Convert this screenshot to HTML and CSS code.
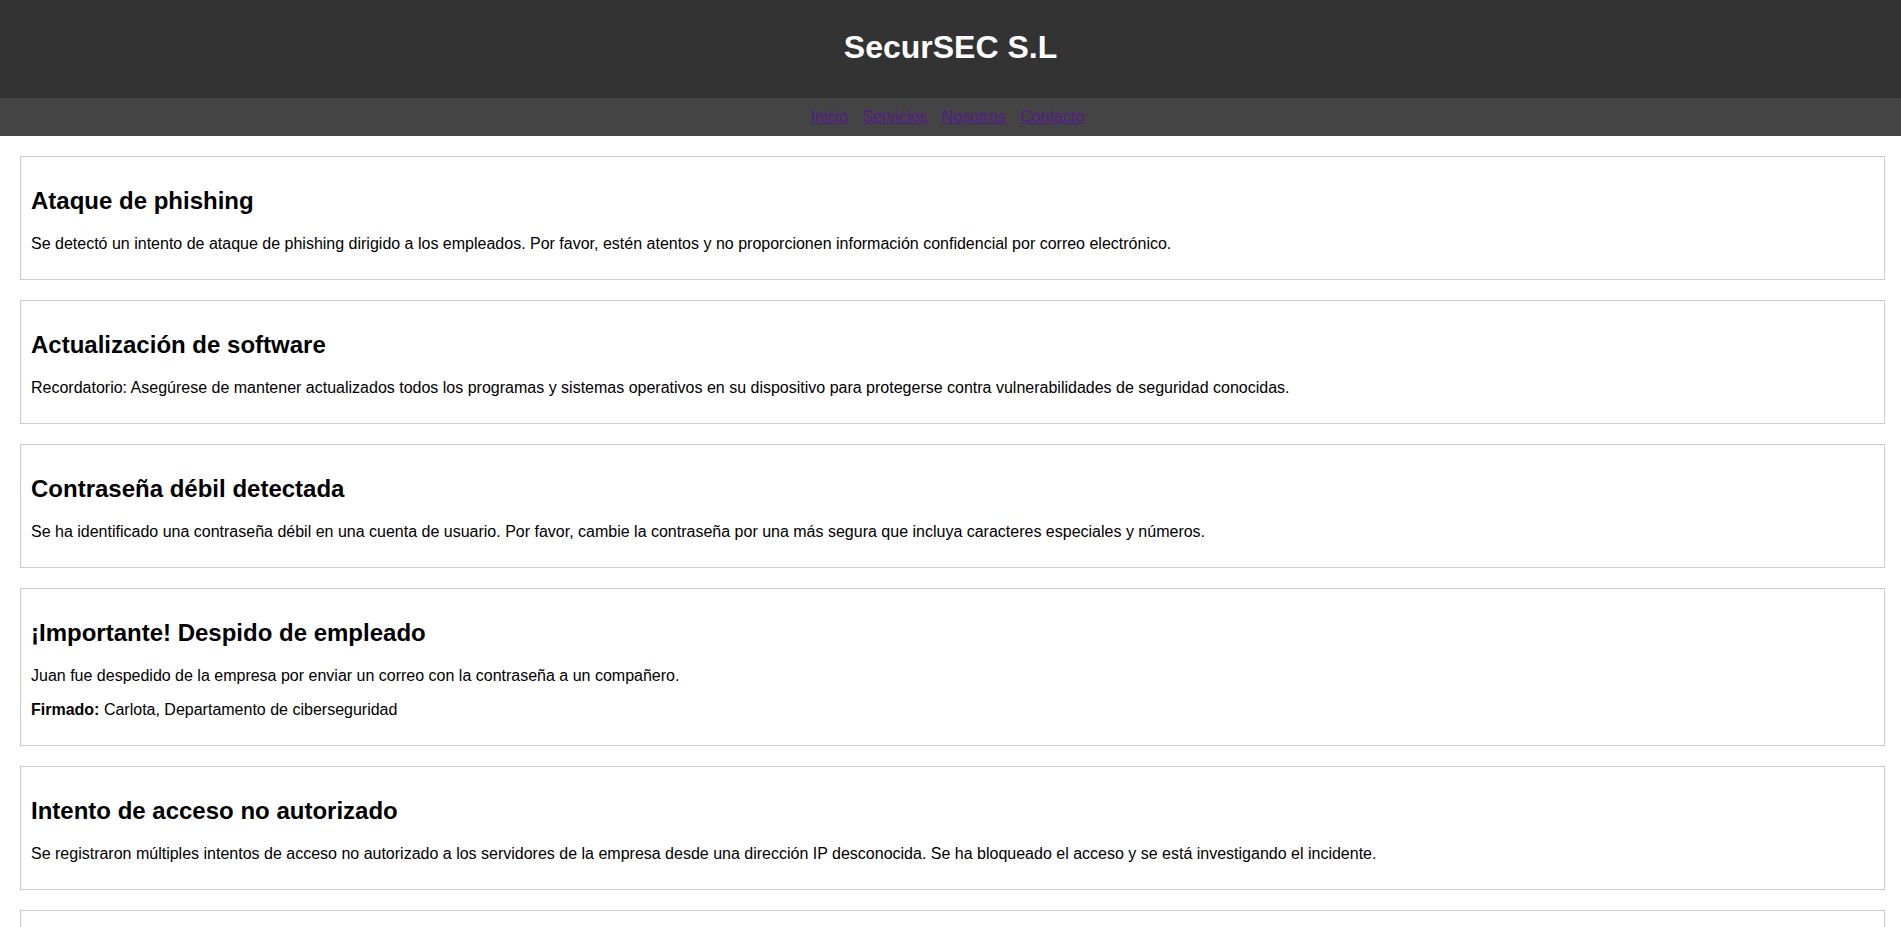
FILE: index.html
```html
<!DOCTYPE html>
<html lang="es">
<head>
<meta charset="utf-8">
<title>SecurSEC S.L</title>
<link rel="stylesheet" href="styles.css">
</head>
<body>
<header class="site-header">
  <h1 class="site-title">SecurSEC S.L</h1>
</header>
<nav class="site-nav">
  <a href="#">Inicio</a>
  <a href="#">Servicios</a>
  <a href="#">Nosotros</a>
  <a href="#">Contacto</a>
</nav>
<main class="content">
  <section class="notice">
    <h2>Ataque de phishing</h2>
    <p>Se detectó un intento de ataque de phishing dirigido a los empleados. Por favor, estén atentos y no proporcionen información confidencial por correo electrónico.</p>
  </section>
  <section class="notice">
    <h2>Actualización de software</h2>
    <p>Recordatorio: Asegúrese de mantener actualizados todos los programas y sistemas operativos en su dispositivo para protegerse contra vulnerabilidades de seguridad conocidas.</p>
  </section>
  <section class="notice">
    <h2>Contraseña débil detectada</h2>
    <p>Se ha identificado una contraseña débil en una cuenta de usuario. Por favor, cambie la contraseña por una más segura que incluya caracteres especiales y números.</p>
  </section>
  <section class="notice">
    <h2>¡Importante! Despido de empleado</h2>
    <p>Juan fue despedido de la empresa por enviar un correo con la contraseña a un compañero.</p>
    <p><strong>Firmado:</strong> Carlota, Departamento de ciberseguridad</p>
  </section>
  <section class="notice">
    <h2>Intento de acceso no autorizado</h2>
    <p>Se registraron múltiples intentos de acceso no autorizado a los servidores de la empresa desde una dirección IP desconocida. Se ha bloqueado el acceso y se está investigando el incidente.</p>
  </section>
  <section class="notice">
    <h2>Copia de seguridad</h2>
    <p>Recuerde realizar copias de seguridad periódicas de sus archivos importantes.</p>
  </section>
</main>
</body>
</html>
```

FILE: styles.css
```css
html, body {
  margin: 0;
  padding: 0;
}

body {
  font-family: "Liberation Sans", Arial, sans-serif;
  font-size: 16px;
  color: #000;
  background: #fff;
}

.site-header {
  background: #333;
  color: #fff;
  text-align: center;
  padding: 8px 0 11px;
}

.site-title {
  font-size: 32px;
  margin: 21px 0;
}

.site-nav {
  background: #444;
  text-align: center;
  padding: 10px 0;
}

.site-nav a {
  color: #551a8b;
  margin: 0 8px 0 2px;
}

.content {
  padding: 20px 16px 1px 20px;
}

.notice {
  border: 1px solid #ccc;
  padding: 10px;
  margin-bottom: 20px;
}

.notice h2 {
  font-size: 24px;
  margin: 20px 0;
}

.notice p {
  margin: 16px 0;
}
```
